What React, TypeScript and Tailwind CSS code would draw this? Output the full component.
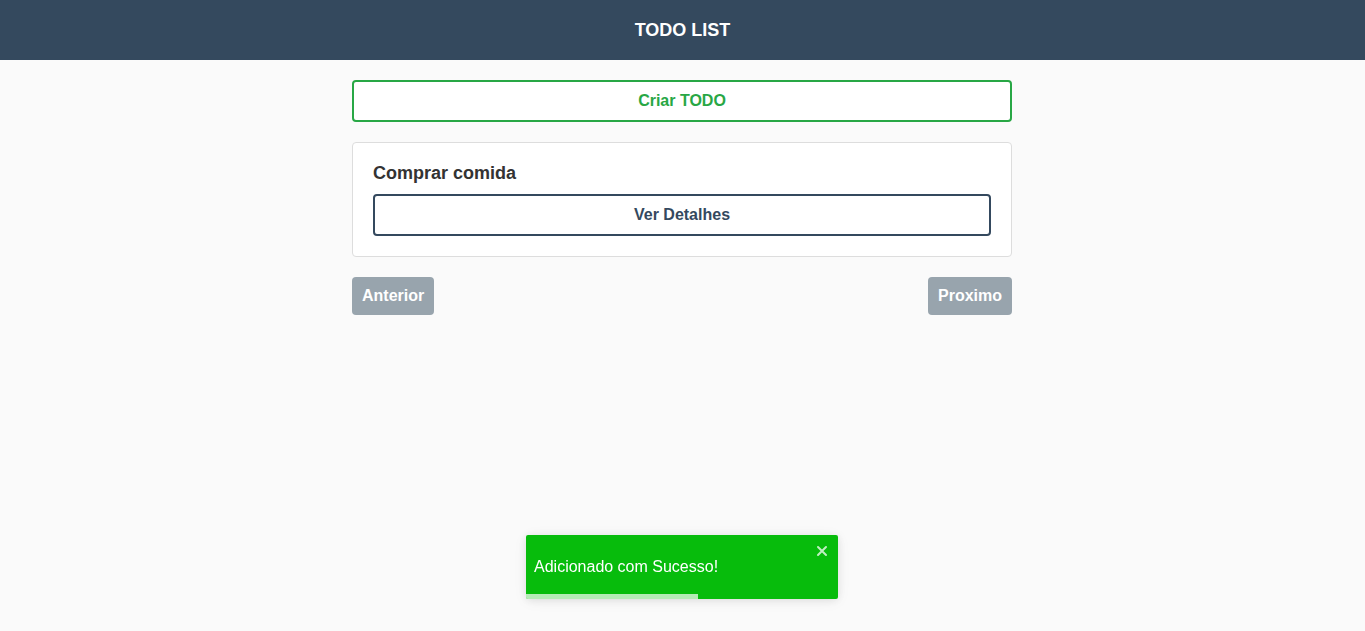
import React from "react";

export default function App() {
  return (
    <div className="min-h-screen bg-[#fafafa] font-['Liberation_Sans',Arial,sans-serif]">
      <header className="h-[60px] bg-[#34495e] flex items-center justify-center">
        <h1 className="text-white font-bold text-[18px]">TODO LIST</h1>
      </header>
      <div className="flex justify-center pr-px">
        <main className="w-[660px] pt-5 flex flex-col gap-5">
          <button className="h-[42px] w-full border-2 border-[#28a745] rounded-[4px] bg-white text-[#28a745] font-bold text-[16px]">
            Criar TODO
          </button>
          <div className="bg-white border border-[#dddddd] rounded-[4px] px-5 pt-[19px] pb-5 flex flex-col">
            <h2 className="text-[18px] font-bold text-[#333333] leading-[22px] mb-[10px]">Comprar comida</h2>
            <button className="h-[42px] w-full border-2 border-[#34495e] rounded-[4px] bg-white text-[#34495e] font-bold text-[16px]">
              Ver Detalhes
            </button>
          </div>
          <div className="flex justify-between">
            <button className="h-[38px] px-[10px] rounded-[4px] bg-[#98a4ad] text-white font-bold text-[16px]">
              Anterior
            </button>
            <button className="h-[38px] px-[10px] rounded-[4px] bg-[#98a4ad] text-white font-bold text-[16px]">
              Proximo
            </button>
          </div>
        </main>
      </div>
      <div className="fixed left-[526px] top-[535px] w-[312px] h-[64px] bg-[#07bc0c] rounded-[2px] shadow-[0_1px_10px_0_rgba(0,0,0,0.1),0_2px_15px_0_rgba(0,0,0,0.05)] overflow-hidden">
        <div className="h-full flex items-center pl-2 pr-2">
          <span className="text-white text-[16px]">Adicionado com Sucesso!</span>
        </div>
        <svg className="absolute right-[10px] top-[10px]" width="12" height="12" viewBox="0 0 12 12">
          <path d="M2 2 L10 10 M10 2 L2 10" stroke="rgba(255,255,255,0.75)" strokeWidth="2" strokeLinecap="round" />
        </svg>
        <div className="absolute left-0 bottom-0 h-[5px] w-[172px] bg-[rgba(255,255,255,0.7)]" />
      </div>
    </div>
  );
}
